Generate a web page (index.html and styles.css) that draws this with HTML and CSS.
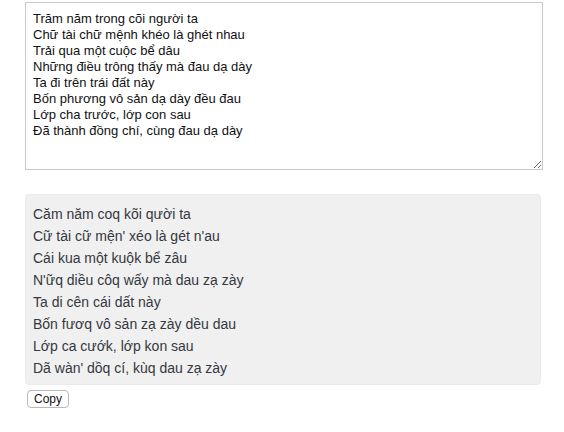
FILE: index.html
```html
<!DOCTYPE html>
<html>
<head>
<meta charset="utf-8">
<link rel="stylesheet" href="styles.css">
</head>
<body>
<div class="page">
<textarea class="input">Trăm năm trong cõi người ta
Chữ tài chữ mệnh khéo là ghét nhau
Trải qua một cuộc bể dâu
Những điều trông thấy mà đau dạ dày
Ta đi trên trái đất này
Bốn phương vô sản dạ dày đều đau
Lớp cha trước, lớp con sau
Đã thành đồng chí, cùng đau dạ dày</textarea>
<div class="output">
<div>Căm năm coq kõi qười ta</div>
<div>Cữ tài cữ mện' xéo là gét n'au</div>
<div>Cái kua một kuộk bể zâu</div>
<div>N'ữq diều côq wấy mà dau zạ zày</div>
<div>Ta di cên cái dất này</div>
<div>Bốn fươq vô sản zạ zày dều dau</div>
<div>Lớp ca cướk, lớp kon sau</div>
<div>Dã wàn' dồq cí, kùq dau zạ zày</div>
</div>
<div class="actions"><button class="copy">Copy</button></div>
</div>
</body>
</html>
```
FILE: styles.css
```css
html, body {
  margin: 0;
  padding: 0;
  background: #fff;
}
.page {
  padding: 2px 0 0 25px;
  width: 518px;
  font-family: "Liberation Sans", Arial, sans-serif;
}
.input {
  display: block;
  box-sizing: border-box;
  width: 518px;
  height: 168px;
  margin: 0;
  padding: 8px 7px;
  border: 1px solid #c9c9c9;
  border-radius: 0;
  font-family: "Liberation Sans", Arial, sans-serif;
  font-size: 13px;
  line-height: 16px;
  color: #111;
  background: #fff;
  outline: none;
}
.output {
  box-sizing: border-box;
  width: 516px;
  margin-top: 24px;
  padding: 8px 7px 5px;
  background: #f0f0f0;
  border: 1px solid #ebebeb;
  border-radius: 4px;
  font-size: 14px;
  line-height: 22px;
  color: #343840;
}
.actions {
  display: flex;
  padding: 5px 0 0 2px;
}
.copy {
  box-sizing: border-box;
  height: 18px;
  padding: 0 6px;
  border: 1px solid #b8b8b8;
  border-radius: 4px;
  background: #fff;
  font-family: "Liberation Sans", Arial, sans-serif;
  font-size: 12px;
  line-height: 16px;
  color: #111;
}
```
